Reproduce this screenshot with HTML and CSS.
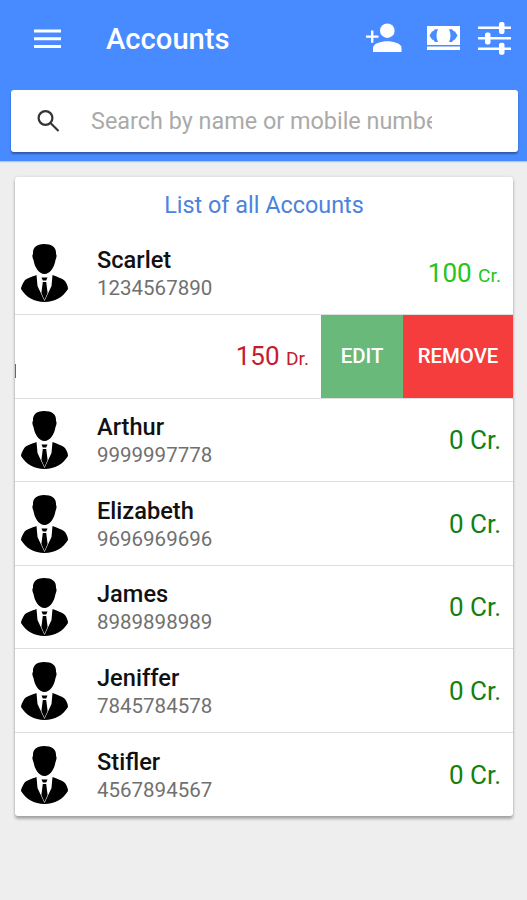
FILE: index.html
```
<!DOCTYPE html>
<html lang="en">
<head>
    <meta charset="utf-8">
    <title>Accounts</title>
    <link rel="stylesheet" href="styles.css">
</head>
<body>

<svg width="0" height="0" class="symbols">
    <symbol id="avatar" viewBox="0 0 48 60">
        <path d="M23 1C15 1 11.500 5 12 11C10.700 12 11.800 15.500 12.500 17C13.500 24 18 31 23.500 31C29 31 33.500 24 34.500 17C35.500 15 36 12 35 11C35.500 4 31 1 23 1Z"/>
        <path d="M15.500 32C11 34 5 35 3 38.500C1.500 41 0 44 0 46C5 54 13 59 23.500 59C34 59 42 54 47 46C47 43 45.500 40 44 38C41 35 36 34 31.500 32L30.500 43L23.500 58L16.500 43Z"/>
        <path d="M20.500 34.500H26.500L25.200 37.500H21.800ZM21.800 39H25.200L26.600 50L23.500 57L20.400 50Z"/>
    </symbol>
</svg>

<header class="header">
    <div class="toolbar">
        <svg class="icon-menu" width="27" height="20" viewBox="0 0 27 20">
            <path d="M0 0.500h27v3H0zM0 8.200h27v3H0zM0 16h27v3H0z"/>
        </svg>
        <h1 class="title">Accounts</h1>
        <svg class="icon-add" width="36" height="31" viewBox="0 0 36 31">
            <circle cx="21.300" cy="7.700" r="7.300"/>
            <path d="M7 29V25C7 20.500 15 18.300 21.300 18.300S35.500 20.500 35.500 25V29Z"/>
            <path d="M5 7.500h2.400v5H12.500v2.200H7.400v5H5v-5H0v-2.200h5z"/>
        </svg>
        <svg class="icon-cash" width="33" height="25" viewBox="0 0 33 25">
            <path fill-rule="evenodd" d="M0 0H33V19H0ZM2.500 9.500L5 5.500L6.500 5L8 3.200H11C9 7 9 12.500 11 16H8L6.500 14L5 13.500ZM30.500 9.500L28 5.500L26.500 5L25 3.200H22C24 7 24 12.500 22 16H25L26.500 14L28 13.500Z"/>
            <path d="M0 20.500h33v3.500H0z"/>
        </svg>
        <svg class="icon-options" width="34" height="34" viewBox="0 0 34 34">
            <path d="M0 4.500h33v2.400H0zM0 15.100h33v2.400H0zM0 25.500h33v2.400H0z"/>
            <rect x="21" y="0" width="5.500" height="12" rx="2"/>
            <rect x="7" y="10.500" width="5.500" height="12" rx="2"/>
            <rect x="21" y="20.800" width="5.500" height="12" rx="2"/>
        </svg>
    </div>
    <div class="search">
        <svg width="23" height="23" viewBox="0 0 23 23">
            <circle cx="8.500" cy="8" r="6.900"/>
            <path d="M13.500 13L21.500 21"/>
        </svg>
        <div class="placeholder">Search by name or mobile number</div>
    </div>
</header>

<main class="card">
    <h2 class="card-title">List of all Accounts</h2>

    <div class="row">
        <svg class="avatar"><use href="#avatar"/></svg>
        <div class="info">
            <div class="name">Scarlet</div>
            <div class="phone">1234567890</div>
        </div>
        <div class="amount credit">100 <small>Cr.</small></div>
    </div>

    <!-- row swiped open -->
    <div class="row swiped">
        <div class="edge"></div>
        <div class="amount debit">150 <small>Dr.</small></div>
        <div class="action edit">EDIT</div>
        <div class="action remove">REMOVE</div>
    </div>

    <div class="row">
        <svg class="avatar"><use href="#avatar"/></svg>
        <div class="info">
            <div class="name">Arthur</div>
            <div class="phone">9999997778</div>
        </div>
        <div class="amount">0 Cr.</div>
    </div>

    <div class="row">
        <svg class="avatar"><use href="#avatar"/></svg>
        <div class="info">
            <div class="name">Elizabeth</div>
            <div class="phone">9696969696</div>
        </div>
        <div class="amount">0 Cr.</div>
    </div>

    <div class="row">
        <svg class="avatar"><use href="#avatar"/></svg>
        <div class="info">
            <div class="name">James</div>
            <div class="phone">8989898989</div>
        </div>
        <div class="amount">0 Cr.</div>
    </div>

    <div class="row">
        <svg class="avatar"><use href="#avatar"/></svg>
        <div class="info">
            <div class="name">Jeniffer</div>
            <div class="phone">7845784578</div>
        </div>
        <div class="amount">0 Cr.</div>
    </div>

    <div class="row">
        <svg class="avatar"><use href="#avatar"/></svg>
        <div class="info">
            <div class="name">Stifler</div>
            <div class="phone">4567894567</div>
        </div>
        <div class="amount">0 Cr.</div>
    </div>
</main>

</body>
</html>
```
FILE: styles.css
```
* {
    box-sizing: border-box;
}
body {
    margin: 0;
    height: 900px;
    overflow: hidden;
    background-color: #eeeeee;
    font-family: Roboto, sans-serif;
}
.symbols {
    display: block;
}
.header {
    height: 161px;
    padding: 0 9px 0 11px;
    background-color: #488aff;
    box-shadow: 0 1px 1px rgba(72,138,255,0.4);
}
.toolbar {
    display: flex;
    align-items: center;
    height: 90px;
    padding: 0 5px 13px 23px;
    fill: white;
}
.title {
    flex: 1;
    margin: 0 0 0 45px;
    color: white;
    font-size: 29.2px;
    font-weight: 500;
    line-height: 36px;
}
.icon-add {
    margin-right: 25px;
    margin-left: -1px;
}
.icon-cash {
    margin-right: 18px;
}
.icon-options {
    margin-right: 1px;
}
.search {
    display: flex;
    align-items: center;
    height: 62px;
    padding-left: 26px;
    background-color: white;
    border-radius: 3px;
    box-shadow: 0 2px 2px rgba(0,0,0,0.35);
}
.search svg {
    fill: none;
    stroke: #333;
    stroke-width: 2.2;
}
.placeholder {
    width: 341px;
    margin-left: 31px;
    overflow: hidden;
    white-space: nowrap;
    color: #aaa;
    font-size: 23.4px;
    line-height: 32px;
}
.card {
    width: 498px;
    height: 639px;
    margin: 16px 14px 0 15px;
    overflow: hidden;
    background-color: white;
    border-radius: 3px;
    box-shadow: 0 3px 3px rgba(0,0,0,0.28), 0 0 3px rgba(0,0,0,0.14);
}
.card-title {
    height: 54.6px;
    margin: 0;
    color: #4c83dc;
    text-align: center;
    font-size: 23.4px;
    font-weight: 400;
    line-height: 56px;
}
.row {
    display: flex;
    align-items: center;
    height: 83.5px;
    padding: 1px 12px 0 6px;
    border-bottom: 1px solid #dedede;
}
.row:last-child {
    border-bottom: none;
}
.avatar {
    width: 48px;
    height: 60px;
}
.info {
    flex: 1;
    margin-top: 2px;
    margin-left: 28px;
}
.name {
    color: #111;
    font-size: 23.6px;
    font-weight: 500;
    line-height: 28px;
}
.phone {
    color: #707070;
    font-size: 20.5px;
    line-height: 28px;
}
.amount {
    color: #128012;
    font-size: 26px;
}
.amount small {
    font-size: 19.2px;
}
.credit {
    color: #22c522;
}
.debit {
    flex: 1;
    padding-right: 12px;
    color: #c51c2c;
    text-align: right;
}
.swiped {
    padding: 0;
}
.edge {
    width: 1px;
    height: 14px;
    margin-top: 30px;
    background-color: #666;
}
.action {
    height: 100%;
    color: white;
    text-align: center;
    font-size: 20.4px;
    font-weight: 500;
    line-height: 82px;
}
.edit {
    width: 82px;
    background-color: #69b97b;
}
.remove {
    width: 110px;
    background-color: #f53d3d;
}
```
